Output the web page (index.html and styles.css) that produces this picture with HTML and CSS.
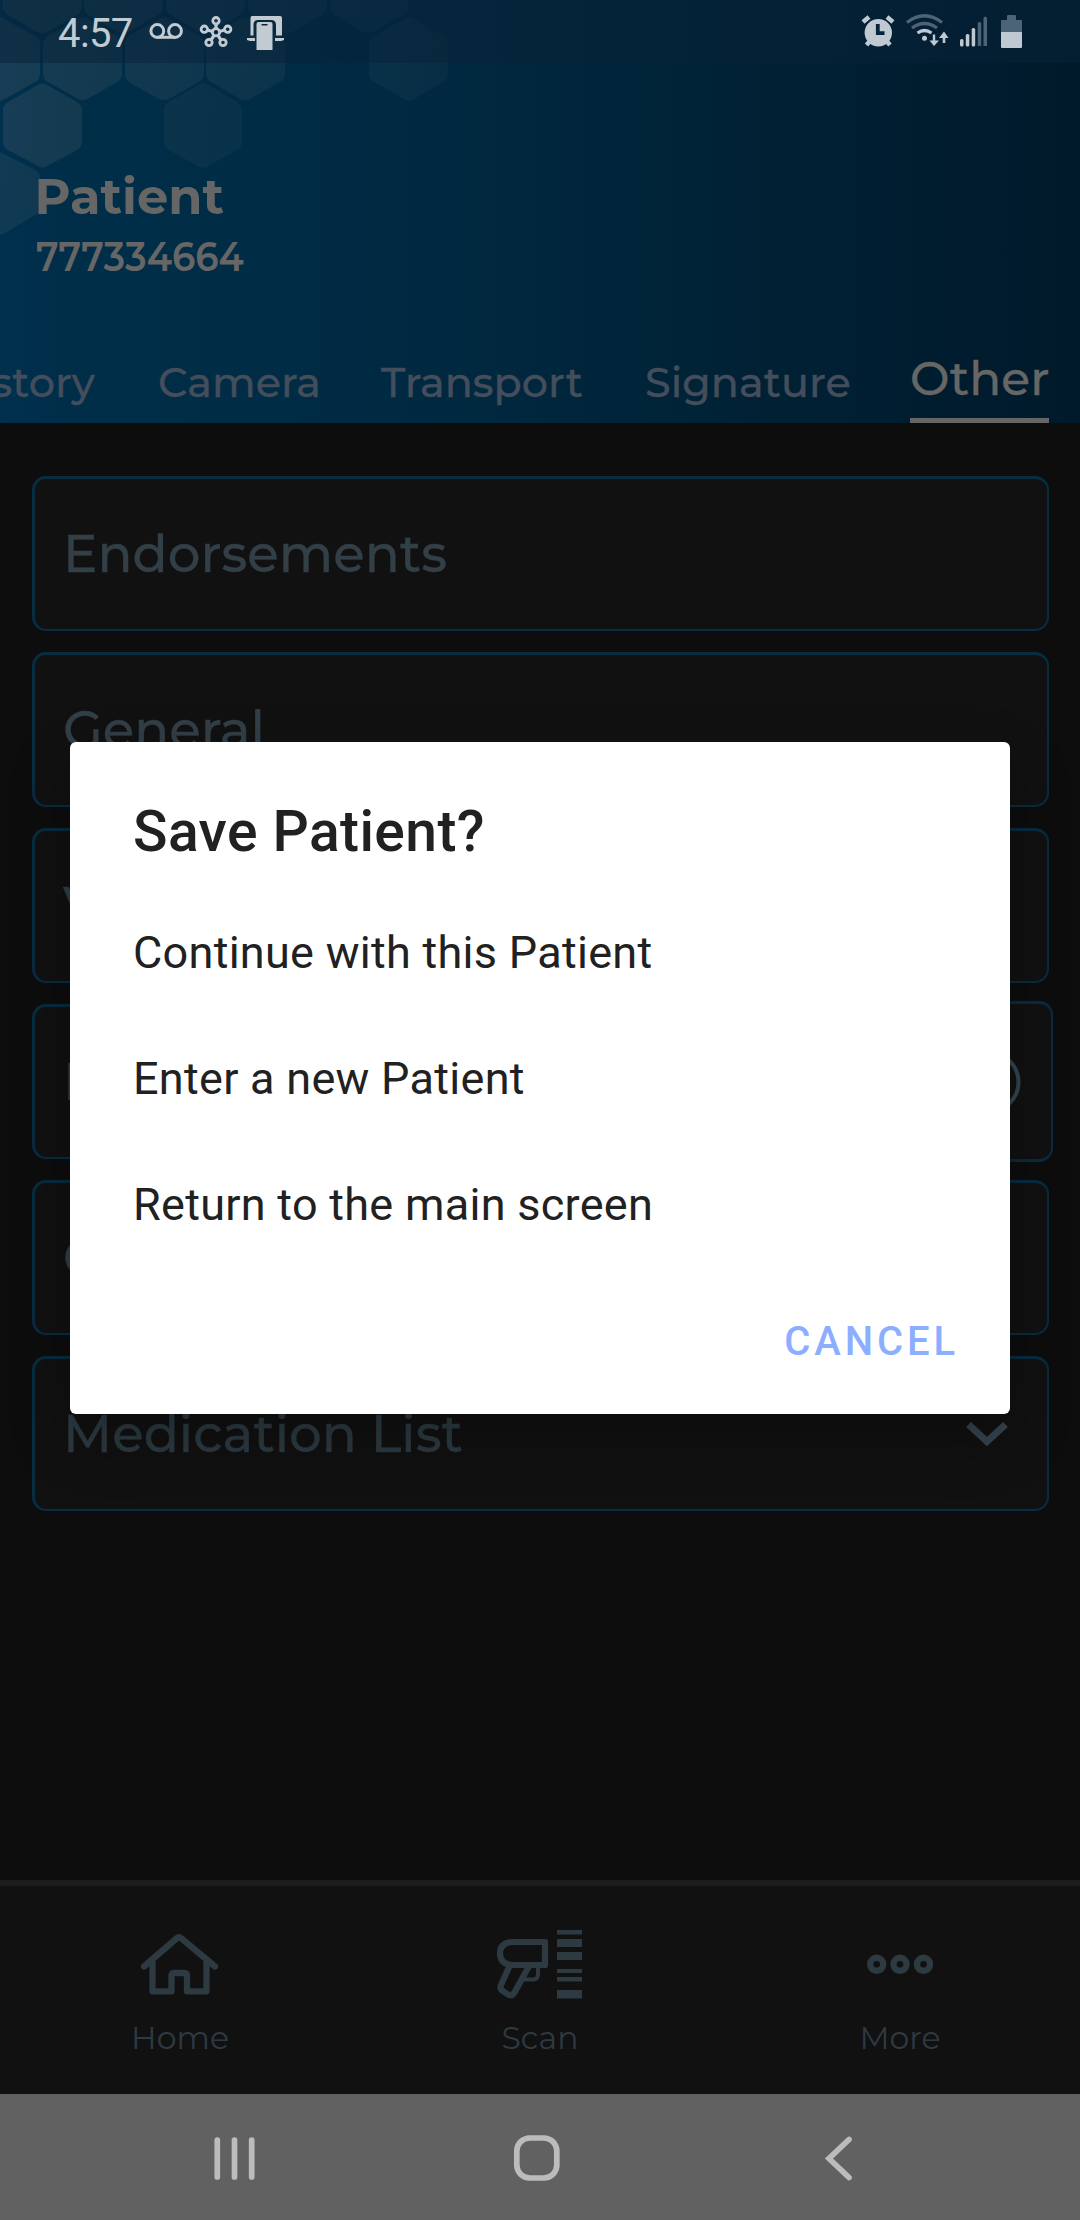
FILE: index.html
```html
<!DOCTYPE html>
<html lang="en">
<head>
<meta charset="utf-8">
<title>Patient</title>
<link rel="stylesheet" href="styles.css">
</head>
<body>
<div class="screen">
  <header class="header">
    <svg class="hexes" width="480" height="240" viewBox="0 0 480 240">
      <defs>
        <linearGradient id="fade" gradientUnits="userSpaceOnUse" x1="0" y1="80" x2="460" y2="140">
          <stop offset="0" stop-color="#9a8c80" stop-opacity=".15"/>
          <stop offset=".5" stop-color="#8a9088" stop-opacity=".09"/>
          <stop offset="1" stop-color="#8a9088" stop-opacity=".04"/>
        </linearGradient>
      </defs>
      <path fill="url(#fade)" d="M3 0H82V6Q82 12 77 15L47 32Q42 34 37 32L8 15Q3 12 3 6ZM84 0H163V6Q163 12 158 15L128 32Q123 34 118 32L89 15Q84 12 84 6ZM166 0H245V6Q245 12 240 15L210 32Q205 34 200 32L171 15Q166 12 166 6ZM248 0H327V6Q327 12 322 15L292 32Q287 34 282 32L253 15Q248 12 248 6ZM330 0H408V6Q408 12 403 15L373 32Q368 34 363 32L335 15Q330 12 330 6Z"/>
      <g fill="url(#fade)">
        <path d="M0 17L35 36Q40 39 40 44V74Q40 79 35 82L5 99L0 101Z"/>
        <path d="M78 19Q82.500 16 87 19L117 36Q122 39 122 44V74Q122 79 117 82L87 99Q82.500 101 78 99L48 82Q43 79 43 74V44Q43 39 48 36Z"/>
        <path d="M159 19Q164 16 169 19L199 36Q204 39 204 44V74Q204 79 199 82L169 99Q164 101 159 99L129 82Q125 79 125 74V44Q125 39 129 36Z"/>
        <path d="M240 19Q245 16 250 19L280 36Q285 39 285 44V74Q285 79 280 82L250 99Q245 102 240 99L211 82Q206 79 206 74V44Q206 39 211 36Z"/>
        <path d="M404 19Q409 16 414 19L443 36Q448 39 448 44V74Q448 79 443 82L414 99Q409 102 404 99L374 82Q369 79 369 74V44Q369 39 374 36Z"/>
        <path d="M38 85Q42.500 82 47 85L77 102Q82 105 82 110V142Q82 147 77 150L47 166Q42.500 169 38 166L8 150Q3 147 3 142V110Q3 105 8 102Z"/>
        <path opacity=".7" d="M198 85Q203 82 208 85L237 102Q242 105 242 110V142Q242 147 237 150L208 166Q203 169 198 166L169 150Q164 147 164 142V110Q164 105 169 102Z"/>
        <path opacity=".75" d="M0 152L35 170Q40 173 40 178V207Q40 212 35 215L5 233L0 235Z"/>
      </g>
    </svg>
    <div class="status">
      <span class="clock">4:57</span>
      <svg class="status-left" width="140" height="36" viewBox="147 14 140 36" fill="none" stroke="#c2cbd2">
        <g stroke-width="3"><circle cx="157.300" cy="31" r="6.400"/><circle cx="175" cy="31" r="6.400"/><path d="M157 37.300H175"/></g>
        <g stroke-width="2.800">
          <circle cx="216" cy="32.300" r="3.600"/><circle cx="216" cy="20.700" r="3.200"/><circle cx="204.300" cy="29.200" r="3.200"/><circle cx="227.700" cy="29.200" r="3.200"/><circle cx="209" cy="42.500" r="3.200"/><circle cx="223" cy="42.500" r="3.200"/>
          <path d="M216 24V29M207.500 30L212.500 31.500M224.500 30L219.500 31.500M211 40L214 35.500M221 40L218 35.500" stroke-width="3.200"/>
        </g>
        <g fill="#c2cbd2" stroke="none"><path d="M252 16H280Q282 16 282 18V35.500H276V25Q276 20 271 20H258Q253.500 20 253.500 25V35.500H250.500V18Q250.500 16 252 16ZM247 38H255V41H250L247 40ZM284 38H275V41H281L284 40Z"/><path fill-rule="evenodd" d="M256.500 50V24Q256.500 22 258.500 22H270.500Q272.500 22 272.500 24V50ZM261.500 24V25.500H267.500V24Z"/></g>
      </svg>
      <svg class="status-right" width="164" height="36" viewBox="860 14 164 36" fill="#c0c9d1">
        <circle cx="878.300" cy="32.700" r="13.700"/>
        <path d="M870 41L866.500 45M886.500 41L890 45M863 22L869 17M893 22L887 17" stroke="#c0c9d1" stroke-width="4.500"/>
        <path d="M877.800 24V33.200H884.500" fill="none" stroke="#04243a" stroke-width="3.800"/>
        <g fill="none" stroke-width="3.200"><path d="M907 22.500Q924.500 9 942 22.500M912 28Q924.500 19 937 28" stroke="#4c6475"/><path d="M917.500 33Q924.500 28 931.500 33" stroke="#c0c9d1"/></g>
        <circle cx="924.500" cy="38.300" r="2.500"/>
        <path d="M932.800 34.500H935.200V40.500H939L934 46L929.500 40.500H932.800ZM942.700 43V38H939L944 31.500L948.500 38H945.300V43Z"/>
        <rect x="960" y="39" width="3.500" height="7.500" rx="1.500"/><rect x="965.800" y="34" width="3.500" height="12.500" rx="1.500"/><rect x="971.700" y="28" width="3.500" height="18.500" rx="1.500"/>
        <path fill="#4c6475" d="M977.700 23Q979.500 21 981.200 23V46H977.700ZM983.500 18Q985.300 15 987 18V46H983.500ZM1001 32V21Q1001 20 1002 20H1007V16Q1007 15 1008 15H1015Q1016 15 1016 16V20H1021Q1022 20 1022 21V32Z"/>
        <path d="M1001 32H1022V47Q1022 48 1021 48H1002Q1001 48 1001 47Z"/>
      </svg>
    </div>
    <div class="patient">Patient</div>
    <div class="patient-id">777334664</div>
    <nav class="tabs">
      <span class="tab first">History</span><span class="tab">Camera</span><span class="tab">Transport</span><span class="tab">Signature</span><span class="tab active">Other</span>
    </nav>
  </header>
  <main class="cards">
    <div class="card">Endorsements</div>
    <div class="card">General</div>
    <div class="card">V</div>
    <div class="split">
      <div class="card split-main">I</div>
      <div class="card split-end"><svg width="64" height="64" viewBox="0 0 64 64"><circle cx="32" cy="32" r="29.500" fill="none" stroke="#36454f" stroke-width="4"/></svg></div>
    </div>
    <div class="card">C</div>
    <div class="card medication"><span>Medication List</span><svg width="42" height="27" viewBox="0 0 42 27"><path d="M2.500 3.500L21 20.500L39.500 3.500" fill="none" stroke="#36454f" stroke-width="7"/></svg></div>
  </main>
  <nav class="bottom">
    <div class="item">
      <svg width="80" height="72" viewBox="140 1928 80 72" fill="none" stroke="#2d3a42" stroke-width="6.300" stroke-linecap="round" stroke-linejoin="round"><path d="M144 1966.500L176.500 1938.500Q179 1936 181.500 1938.500L215 1966.500M152.500 1960V1991.300H171.500V1976Q171.500 1973 174.500 1973H184Q187 1973 187 1976V1991.300H206.500V1960"/></svg>
      <span>Home</span>
    </div>
    <div class="item">
      <svg width="88" height="72" viewBox="495 1928 88 72" fill="none" stroke="#2d3a42" stroke-width="6.200" stroke-linejoin="round"><path d="M511 1942H544V1965H511Q499 1964 499 1953.500Q499 1943 511 1942ZM508.500 1966L500 1985Q498.500 1989 502 1991L507 1994.500Q511 1996.500 513.500 1992.500L528 1966"/><path d="M537 1967V1974Q537 1979.500 532 1979.500H523" stroke-width="4"/><path fill="#2d3a42" stroke="none" d="M556 1930H581V1934.500H556ZM556 1939H581V1947H556ZM556 1952H581V1960H556ZM556 1969H581V1973H556ZM556 1977H581V1981.500H556ZM556 1990H581V1998.500H556Z"/></svg>
      <span>Scan</span>
    </div>
    <div class="item">
      <svg width="70" height="72" viewBox="866 1928 70 72" fill="none" stroke="#2d3a42" stroke-width="6.400"><circle cx="877.700" cy="1964.300" r="6.500"/><circle cx="901" cy="1964.300" r="6.500"/><circle cx="924.500" cy="1964.300" r="6.500"/></svg>
      <span>More</span>
    </div>
  </nav>
  <div class="system">
    <svg width="1080" height="126" viewBox="0 2094 1080 126" fill="none" stroke="#bcbcbc" stroke-width="5.700" stroke-linecap="round"><path d="M217.300 2140V2177M234.500 2140V2177M251.700 2140V2177"/><rect x="516.800" y="2138" width="40" height="40" rx="13"/><path d="M849 2139.500L829 2158.500L849 2177.500"/></svg>
  </div>
  <section class="dialog">
    <h1>Save Patient?</h1>
    <ul><li>Continue with this Patient</li><li>Enter a new Patient</li><li>Return to the main screen</li></ul>
    <button class="cancel">CANCEL</button>
  </section>
</div>
</body>
</html>
```
FILE: styles.css
```css
* { box-sizing: border-box; }
body { margin: 0; background: #0d0d0d; font-family: Montserrat, Inter, sans-serif; }
svg { display: block; flex: none; }
.screen { position: relative; width: 1080px; height: 2220px; display: flex; flex-direction: column; overflow: hidden; }

.header { position: relative; height: 423px; display: flex; flex-direction: column; background: linear-gradient(90deg, #00304f 0, #002e49 60px, #002a42 400px, #002236 720px, #001a2b 1080px); }
.hexes { position: absolute; left: 0; top: 0; }
.status { position: relative; height: 63px; display: flex; align-items: flex-start; padding: 0 56px 0 58px; background: rgba(8, 34, 56, .5); }
.clock { width: 89px; font: 40px/48px Roboto, sans-serif; color: #c2cbd2; padding-top: 10px; letter-spacing: -.6px; }
.status-left, .status-right { margin-top: 14px; }
.status-right { margin-left: auto; }
.patient { position: relative; margin: 103px 0 0 34.500px; font-size: 49.500px; line-height: 60px; font-weight: 700; color: #666; }
.patient-id { position: relative; margin: 5px 0 0 36px; font-size: 40px; line-height: 51px; font-weight: 600; color: #666; transform: scaleX(.93); transform-origin: left; }
.tabs { margin-top: auto; height: 66px; display: grid; grid-template-columns: 95px 158px 200px 201px 139px; column-gap: 64px; }
.tab { font-size: 41.300px; line-height: 51px; font-weight: 500; letter-spacing: .050px; color: #444d5b; -webkit-text-stroke: .300px #444d5b; white-space: nowrap; }
.tab:nth-child(2) { margin-left: -1px; }
.first { display: flex; justify-content: flex-end; overflow: hidden; }
.active { font-size: 47px; line-height: 43px; color: #666; -webkit-text-stroke-color: #666; border-bottom: 5px solid #666; }

.cards { flex: 1; display: flex; flex-direction: column; gap: 21px; padding: 53px 31px 0 32px; }
.card { height: 155px; border: 3px solid #082c42; border-right-width: 2px; border-bottom-width: 2px; border-radius: 14px; background: #111; padding: 0 38px 0 28px; font-size: 51.500px; line-height: 150px; font-weight: 500; color: #323f47; -webkit-text-stroke: .300px #323f47; }
.split { display: flex; margin-right: -4px; height: 155px; }
.split-main { flex: 1; border-right: 0; border-radius: 14px 0 0 14px; }
.split-end { width: 200px; height: 161px; margin-top: -3px; border-left: 0; border-bottom-width: 3px; border-radius: 0 14px 14px 0; padding: 0 30px 0 0; display: flex; align-items: center; justify-content: flex-end; }
.medication { display: flex; justify-content: space-between; align-items: center; color: #2d3a42; -webkit-text-stroke-color: #2d3a42; padding-right: 39px; }

.bottom { height: 214px; border-top: 6px solid #1c1c1c; background: #111; display: grid; grid-template-columns: repeat(3, 1fr); }
.item { display: flex; flex-direction: column; align-items: center; padding-top: 42px; font-size: 31.500px; line-height: 40px; color: #2d3a42; }
.item span { margin-top: 18px; }
.system { height: 126px; background: #616161; }

.dialog { position: absolute; left: 70px; top: 742px; width: 940px; height: 672px; border-radius: 6px; background: #fff; box-shadow: 0 24px 60px rgba(0, 0, 0, .3); padding: 52px 51px 0 63px; font-family: Roboto, sans-serif; color: #212121; display: flex; flex-direction: column; }
h1 { margin: 0; font-size: 57px; line-height: 76px; font-weight: 500; letter-spacing: .4px; }
ul { list-style: none; margin: 20px 0 0; padding: 0; }
li { font-size: 45px; line-height: 126px; letter-spacing: .280px; }
.cancel { align-self: flex-end; margin-top: 49px; padding: 0; border: 0; background: none; font: 500 40px/50px Roboto, sans-serif; letter-spacing: 3.900px; color: #8caeff; }
```
